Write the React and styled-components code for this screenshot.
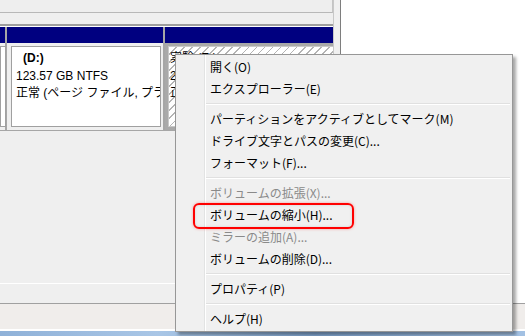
import React from "react";
import styled, { createGlobalStyle, css } from "styled-components";

const GlobalStyle = createGlobalStyle`
  html, body { margin: 0; padding: 0; background: #ffffff; overflow: hidden; }
  body { font-family: "Liberation Sans", "Noto Sans CJK JP", sans-serif; }
`;

const Screen = styled.div`
  position: relative;
  width: 525px;
  height: 336px;
  overflow: hidden;
  display: flex;
  flex-direction: column;
  background: #ffffff;
`;

const Workspace = styled.div`
  height: 303px;
  display: flex;
`;

const MgmtWindow = styled.div`
  width: 333px;
  display: flex;
  flex-direction: column;
  background: #efefef;
`;

const ListPane = styled.div`
  height: 12px;
  background: #eeeeee;
  border-bottom: 1px solid #b8b8b8;
  border-right: 1px solid #c4c4c4;
`;

const Splitter = styled.div`
  height: 11px;
  background: #efefef;
  border-bottom: 2px solid #9e9e9e;
`;

const DiskPane = styled.div`
  flex: 1;
  display: flex;
  flex-direction: column;
  border-top: 1px solid #ffffff;
  border-bottom: 1px solid #ffffff;
`;

const PartitionRow = styled.div`
  display: flex;
  gap: 2px;
  background: #a6a6a6;
  border-bottom: 1px solid #a6a6a6;
  padding-right: 2px;
`;

const Partition = styled.div`
  width: ${(p) => p.$w}px;
  flex: ${(p) => (p.$grow ? 1 : "none")};
  display: flex;
  flex-direction: column;
  background: ${(p) => (p.$selected ? "#a9a9a9" : "#efefef")};
`;

const PartHeader = styled.div`
  height: 16px;
  background: #000080;
`;

const PartBody = styled.div`
  padding: ${(p) => p.$pad};
  display: flex;
`;

const VolumeBox = styled.div`
  flex: 1;
  height: 81px;
  box-sizing: border-box;
  border: 1px solid ${(p) => (p.$hatched ? "#c8c8c8" : "#a0a0a0")};
  padding: 3px 0 0 4px;
  overflow: hidden;
  white-space: nowrap;
  font-size: 12px;
  line-height: 17.5px;
  color: #000;
  ${(p) =>
    p.$hatched
      ? css`
          background: repeating-linear-gradient(
            135deg,
            #ffffff 0 4.6px,
            #b4b4b4 4.6px 5.7px
          );
          padding-left: 1px;
        `
      : css`
          background: #ffffff;
        `}
`;

const VolumeTitle = styled.div`
  font-weight: bold;
  padding-left: 7px;
`;

const VolumeLine = styled.div``;

const EmptyArea = styled.div`
  flex: 1;
`;

const Legend = styled.div`
  height: 19px;
  background: #efefef;
`;

const Frame = styled.div`
  width: 6px;
  background: #f0f0f0;
  border-left: 1px solid #c8c8c8;
  border-right: 1px solid #7e7e7e;
`;

const OtherWindow = styled.div`
  flex: 1;
  background: #ffffff;
`;

const StatusBar = styled.div`
  height: 25px;
  background: #f0edeb;
  border-top: 1px solid #a0a0a0;
  border-bottom: 2px solid #ffffff;
`;

const Taskbar = styled.div`
  flex: 1;
  background: linear-gradient(90deg, #8fb1d8, #a9c6e6 30%, #7fa3cd 60%, #a3c1e3);
`;

const Menu = styled.div`
  position: absolute;
  left: 175px;
  top: 54px;
  width: 338px;
  box-sizing: border-box;
  padding: 1px 0;
  border: 1px solid #979797;
  background: linear-gradient(
    90deg,
    #f0f0f0 0 28px,
    #e2e3e3 28px 29px,
    #ffffff 29px 30px,
    #f0f0f0 30px
  );
  box-shadow: 3px 3px 3px rgba(0, 0, 0, 0.35);
  font-family: "Noto Sans CJK JP", "Liberation Sans", sans-serif;
  font-size: 12px;
`;

const MenuItem = styled.div`
  position: relative;
  height: 22px;
  line-height: 22px;
  padding-left: 34px;
  color: ${(p) => (p.$disabled ? "#8a8a8a" : "#000000")};
  white-space: nowrap;
  ${(p) =>
    p.$marked &&
    css`
      &::after {
        content: "";
        position: absolute;
        left: 17px;
        top: -1px;
        width: 161px;
        height: 26px;
        box-sizing: border-box;
        border: 2px solid #ff0000;
        border-radius: 6px;
        box-shadow: 0 0 3px rgba(255, 0, 0, 0.35), inset 0 0 3px rgba(0, 0, 0, 0.12);
      }
    `}
`;

const Separator = styled.div`
  height: 8px;
  margin: 0 2px 0 30px;
  display: flex;
  flex-direction: column;
  justify-content: center;
  &::before {
    content: "";
    height: 1px;
    background: #e0e0e0;
  }
  &::after {
    content: "";
    height: 1px;
    background: #ffffff;
  }
`;

const menu = [
  { label: "開く(O)" },
  { label: "エクスプローラー(E)" },
  { sep: true },
  { label: "パーティションをアクティブとしてマーク(M)" },
  { label: "ドライブ文字とパスの変更(C)..." },
  { label: "フォーマット(F)..." },
  { sep: true },
  { label: "ボリュームの拡張(X)...", disabled: true },
  { label: "ボリュームの縮小(H)...", marked: true },
  { label: "ミラーの追加(A)...", disabled: true },
  { label: "ボリュームの削除(D)..." },
  { sep: true },
  { label: "プロパティ(P)" },
  { sep: true },
  { label: "ヘルプ(H)" },
];

export default function App() {
  return (
    <>
      <GlobalStyle />
      <Screen>
        <Workspace>
          <MgmtWindow>
            <ListPane />
            <Splitter />
            <DiskPane>
              <PartitionRow>
                <Partition $w={5}>
                  <PartHeader />
                  <PartBody $pad="3px 2px 3px 0">
                    <VolumeBox />
                  </PartBody>
                </Partition>
                <Partition $w={156}>
                  <PartHeader />
                  <PartBody $pad="3px 2px 3px 4px">
                    <VolumeBox>
                      <VolumeTitle>(D:)</VolumeTitle>
                      <VolumeLine>123.57 GB NTFS</VolumeLine>
                      <VolumeLine>正常 (ページ ファイル, プライマリ パーティション)</VolumeLine>
                    </VolumeBox>
                  </PartBody>
                </Partition>
                <Partition $grow $selected>
                  <PartHeader />
                  <PartBody $pad="3px">
                    <VolumeBox $hatched>
                      <VolumeLine>実験 (E:)</VolumeLine>
                      <VolumeLine>264.20 GB NTFS</VolumeLine>
                      <VolumeLine>正常 (プライマリ パーティション)</VolumeLine>
                    </VolumeBox>
                  </PartBody>
                </Partition>
              </PartitionRow>
              <EmptyArea />
            </DiskPane>
            <Legend />
          </MgmtWindow>
          <Frame />
          <OtherWindow />
        </Workspace>
        <StatusBar />
        <Taskbar />
        <Menu>
          {menu.map((m, i) =>
            m.sep ? (
              <Separator key={i} />
            ) : (
              <MenuItem key={i} $disabled={m.disabled} $marked={m.marked}>
                {m.label}
              </MenuItem>
            )
          )}
        </Menu>
      </Screen>
    </>
  );
}
